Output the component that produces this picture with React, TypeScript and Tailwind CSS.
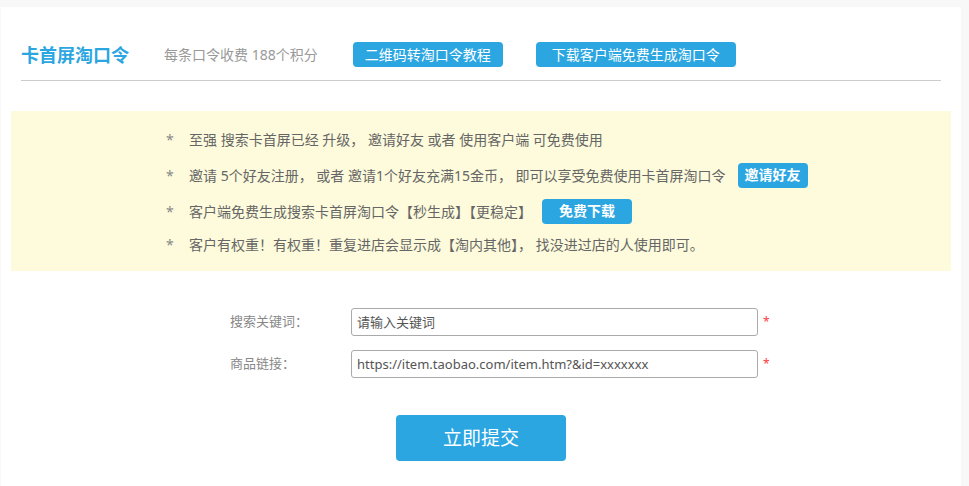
import React from "react";

const font = { fontFamily: '"Noto Sans", "Noto Sans CJK SC", sans-serif' };

const BlueButton: React.FC<{ children: React.ReactNode; className?: string }> = ({
  children,
  className = "",
}) => (
  <button
    className={`h-[25px] rounded-[4px] bg-[#2ba6e1] text-[14px] text-white flex items-center justify-center leading-none ${className}`}
  >
    {children}
  </button>
);

const App: React.FC = () => {
  const tips = [
    { text: "至强 搜索卡首屏已经 升级， 邀请好友 或者 使用客户端 可免费使用" },
    {
      text: "邀请 5个好友注册， 或者 邀请1个好友充满15金币， 即可以享受免费使用卡首屏淘口令",
      btn: "邀请好友",
      btnClass: "w-[70px] ml-3 font-bold",
    },
    {
      text: "客户端免费生成搜索卡首屏淘口令【秒生成】【更稳定】",
      btn: "免费下载",
      btnClass: "w-[90px] ml-[10px] font-bold",
    },
    { text: "客户有权重！有权重！重复进店会显示成【淘内其他】， 找没进过店的人使用即可。" },
  ];

  return (
    <div className="h-[486px] w-[969px] bg-[#f8f8f8] pt-[7px] pl-px pr-2 overflow-hidden" style={font}>
      <div className="h-full bg-white px-[10px]">
        {/* Header */}
        <div className="mx-[10px] pt-[35px] flex items-center h-[60px]">
          <span className="text-[18px] font-bold text-[#2ba6e1] leading-none">卡首屏淘口令</span>
          <span className="ml-[35px] text-[14px] text-[#999]">每条口令收费 188个积分</span>
          <BlueButton className="ml-[35px] w-[150px]">二维码转淘口令教程</BlueButton>
          <BlueButton className="ml-[33px] w-[200px]">下载客户端免费生成淘口令</BlueButton>
        </div>
        <div className="mx-[10px] mt-[13px] border-t border-[#cccccc]" />

        {/* Tips */}
        <div className="mt-[30px] h-[160px] bg-[#fdfbdc] pl-[155px] pt-[15px] flex flex-col gap-[10px] text-[14px] text-[#666]">
          {tips.map((t, i) => (
            <div key={i} className={`flex items-center ${i === 3 ? "h-[20px]" : "h-[26px]"}`}>
              <span className="w-[23px] text-[#888]">*</span>
              <span className="whitespace-pre">{t.text}</span>
              {t.btn && <BlueButton className={t.btnClass}>{t.btn}</BlueButton>}
            </div>
          ))}
        </div>

        {/* Form */}
        <div className="mt-[37px] ml-[219px] flex flex-col gap-[14px] text-[13px]">
          <div className="flex items-center">
            <span className="w-[121px] text-[#888]">搜索关键词：</span>
            <input
              className="h-[28px] w-[407px] rounded-[3px] border border-[#aaa] px-[5px] text-[#555] placeholder:text-[#555] outline-none"
              placeholder="请输入关键词"
            />
            <span className="ml-[5px] text-[12px] text-[#ff3b3b]">*</span>
          </div>
          <div className="flex items-center">
            <span className="w-[121px] text-[#888]">商品链接：</span>
            <input
              className="h-[28px] w-[407px] rounded-[3px] border border-[#aaa] px-[5px] text-[#555] placeholder:text-[#555] outline-none"
              placeholder="https://item.taobao.com/item.htm?&id=xxxxxxx"
            />
            <span className="ml-[5px] text-[12px] text-[#ff3b3b]">*</span>
          </div>
        </div>

        <button className="mt-[37px] ml-[385px] h-[46px] w-[170px] rounded-[4px] bg-[#2ba6e1] text-[19px] text-white">
          立即提交
        </button>
      </div>
    </div>
  );
};

export default App;
